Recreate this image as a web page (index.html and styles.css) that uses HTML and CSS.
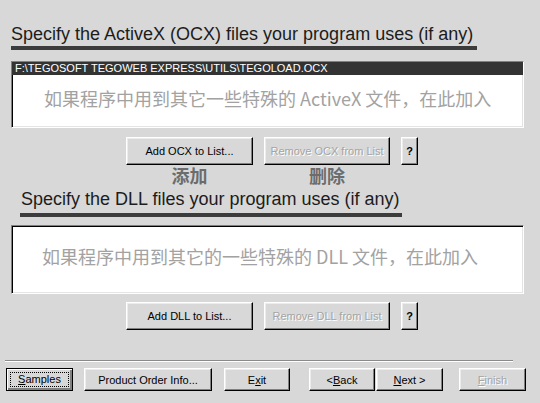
FILE: index.html
```html
<!DOCTYPE html>
<html lang="en">
<head>
    <meta charset="UTF-8">
    <title>Setup Wizard - Extra Files</title>
    <link rel="stylesheet" href="styles.css">
</head>
<body>
    <div class="wizard">
        <h2 class="section-title title-ocx">Specify the ActiveX (OCX) files your program uses (if any)</h2>
        <div class="listbox list-ocx">
            <div class="list-item selected">F:\TEGOSOFT TEGOWEB EXPRESS\UTILS\TEGOLOAD.OCX</div>
            <p class="hint hint-ocx">如果程序中用到其它一些特殊的 ActiveX 文件，在此加入</p>
        </div>
        <div class="btn-row">
            <div class="btn-col">
                <button class="btn btn-add">Add OCX to List...</button>
                <span class="note">添加</span>
            </div>
            <div class="btn-col">
                <button class="btn btn-remove" disabled>Remove OCX from List</button>
                <span class="note">删除</span>
            </div>
            <button class="btn btn-help">?</button>
        </div>

        <h2 class="section-title title-dll">Specify the DLL files your program uses (if any)</h2>
        <div class="listbox list-dll">
            <p class="hint hint-dll">如果程序中用到其它的一些特殊的 DLL 文件，在此加入</p>
        </div>
        <div class="btn-row">
            <button class="btn btn-add">Add DLL to List...</button>
            <button class="btn btn-remove" disabled>Remove DLL from List</button>
            <button class="btn btn-help">?</button>
        </div>

        <div class="separator"></div>
        <div class="footer">
            <button class="btn btn-foot btn-default"><span class="focus"><u>S</u>amples</span></button>
            <button class="btn btn-foot btn-order">Product Order Info...</button>
            <button class="btn btn-foot btn-exit">E<u>x</u>it</button>
            <div class="nav">
                <button class="btn btn-foot btn-back">&lt;<u>B</u>ack</button>
                <button class="btn btn-foot btn-next"><u>N</u>ext &gt;</button>
            </div>
            <button class="btn btn-foot btn-finish" disabled><u>F</u>inish</button>
        </div>
    </div>
</body>
</html>
```

FILE: styles.css
```css
body {
    margin: 0;
    background: #d8d8d8;
    font-family: 'Liberation Sans', Arial, sans-serif;
}
.wizard {
    width: 540px;
    height: 403px;
    overflow: hidden;
}
.section-title {
    width: fit-content;
    margin: 0;
    font-size: 18px;
    line-height: 20px;
    font-weight: normal;
    color: #1c1c1c;
    border-bottom: 4px solid #3c3c3c;
}
.title-ocx {
    margin: 24px 0 0 11px;
    padding: 0 4px 2px 0;
}
.title-dll {
    margin: 5px 0 0 20px;
    padding: 0 2px 4px 1px;
}
.listbox {
    box-sizing: border-box;
    width: 513px;
    margin-left: 11px;
    background: #fff;
    border: 1px solid;
    border-color: #808080 #fff #fff #808080;
    box-shadow: inset 1px 1px #000, inset -1px -1px #e4e4e4;
}
.list-ocx {
    margin-top: 11px;
    height: 67px;
}
.list-dll {
    margin-top: 8px;
    height: 69px;
}
.list-item {
    height: 13px;
    padding-left: 3px;
    font-size: 11px;
    line-height: 13px;
    white-space: nowrap;
}
.list-item.selected {
    background: #333;
    color: #fff;
}
.hint {
    margin: 0;
    font-family: 'Noto Sans CJK SC', sans-serif;
    font-size: 18px;
    line-height: 24px;
    color: #a2a2a2;
    white-space: nowrap;
}
.hint-ocx {
    margin-top: 11px;
    padding-left: 32px;
}
.hint-dll {
    margin-top: 18px;
    padding-left: 30px;
}
.btn-row {
    display: flex;
    align-items: flex-start;
    gap: 11px;
    margin: 9px 0 0 126px;
}
.list-dll + .btn-row {
    margin-top: 8px;
}
.btn-col {
    display: flex;
    flex-direction: column;
    align-items: center;
}
.btn {
    box-sizing: border-box;
    height: 28px;
    padding: 0;
    background: #d8d8d8;
    border: 1px solid;
    border-color: #fff #000 #000 #fff;
    box-shadow: inset -1px -1px #808080, inset 1px 1px #ececec;
    font-family: 'Liberation Sans', Arial, sans-serif;
    font-size: 11px;
    color: #000;
}
.btn:disabled {
    color: #a4a4a4;
    text-shadow: 1px 1px #fff;
}
.btn-add {
    width: 127px;
}
.btn-remove {
    width: 126px;
}
.btn-help {
    width: 17px;
    font-weight: bold;
}
.note {
    margin-top: 1px;
    font-family: 'Noto Sans CJK SC', sans-serif;
    font-size: 18px;
    line-height: 18px;
    font-weight: bold;
    color: #6c6c6c;
}
.separator {
    width: 508px;
    margin: 30px 0 0 5px;
    border-top: 1px solid #8a8a8a;
    border-bottom: 1px solid #fff;
}
.footer {
    display: flex;
    margin: 6px 0 0 6px;
}
.btn-foot {
    height: 23px;
    width: 66px;
}
.btn-default {
    width: 67px;
    border-color: #000;
    box-shadow: inset 1px 1px #fff, inset -2px -2px #808080;
    display: flex;
    padding: 3px;
}
.focus {
    flex: 1;
    border: 1px dotted #000;
    line-height: 13px;
}
.btn-order {
    width: 128px;
    margin-left: 11px;
}
.btn-exit {
    margin-left: 12px;
}
.nav {
    display: flex;
    gap: 1px;
    margin-left: 19px;
}
.btn-next,
.btn-finish {
    width: 67px;
}
.btn-finish {
    margin-left: 16px;
}
```
